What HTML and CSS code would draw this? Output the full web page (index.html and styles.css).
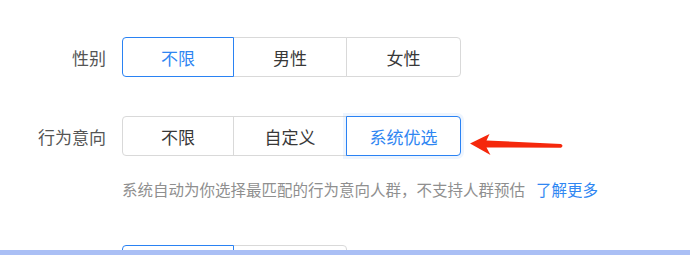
FILE: index.html
```html
<!DOCTYPE html>
<html lang="zh">
<head>
<meta charset="utf-8">
<link rel="stylesheet" href="styles.css">
</head>
<body>
<div class="form">
  <div class="row">
    <div class="label">性别</div>
    <div class="group">
      <div class="btn w1 active">不限</div>
      <div class="btn w2">男性</div>
      <div class="btn w3">女性</div>
    </div>
  </div>
  <div class="row row2">
    <div class="label">行为意向</div>
    <div class="group">
      <div class="btn w1">不限</div>
      <div class="btn w2">自定义</div>
      <div class="btn w3 active glow">系统优选</div>
    </div>
  </div>
  <div class="row hint-row">
    <div></div>
    <div class="hint">系统自动为你选择最匹配的行为意向人群，不支持人群预估<a class="link">了解更多</a></div>
  </div>
  <div class="row row3">
    <div class="label"></div>
    <div class="group">
      <div class="btn w1 active"></div>
      <div class="btn w2"></div>
    </div>
  </div>
</div>
<svg class="arrow" width="110" height="35" viewBox="0 0 110 35">
  <path d="M10,18.5 L29.5,9 L26.5,15.5 L101,19 Q104,20.8 101,22.8 L26.5,22.5 L30.5,30 Z" fill="#f5280c"/>
</svg>
<div class="bottom-bar"></div>
</body>
</html>
```
FILE: styles.css
```css
html, body {
  margin: 0;
  padding: 0;
  background: #ffffff;
  font-family: "Noto Sans CJK SC", "Noto Sans", sans-serif;
  overflow: hidden;
}
.form {
  padding-top: 37px;
  display: flex;
  flex-direction: column;
}
.row {
  display: grid;
  grid-template-columns: 106px auto;
  column-gap: 16px;
  align-items: center;
}
.row2 { margin-top: 39px; }
.hint-row { margin-top: 23px; }
.row3 { margin-top: 46px; }
.label {
  text-align: right;
  font-size: 17px;
  color: #555555;
}
.group {
  display: flex;
  height: 40px;
}
.btn {
  box-sizing: border-box;
  height: 40px;
  border: 1px solid #d9d9d9;
  display: flex;
  align-items: center;
  justify-content: center;
  font-size: 17px;
  color: #383838;
  background: #fff;
  position: relative;
}
.btn + .btn { margin-left: -1px; }
.w1 { width: 112px; border-radius: 4px 0 0 4px; }
.w2 { width: 114px; }
.w3 { width: 115px; border-radius: 0 4px 4px 0; }
.row3 .w2 { border-radius: 0 4px 4px 0; }
.btn.active {
  border-color: #2a82f3;
  color: #2f86f2;
  z-index: 1;
}
.btn.glow {
  box-shadow: 0 0 0 3px rgba(42, 130, 243, 0.08);
}
.hint {
  font-size: 15.5px;
  line-height: 20px;
  color: #8f8f8f;
  white-space: nowrap;
}
.link {
  color: #2f86f2;
  margin-left: 11px;
}
.arrow {
  position: absolute;
  left: 460px;
  top: 125px;
}
.bottom-bar {
  position: fixed;
  left: 0;
  right: 0;
  bottom: 0;
  height: 5px;
  background: #aabff5;
  z-index: 5;
}
```
